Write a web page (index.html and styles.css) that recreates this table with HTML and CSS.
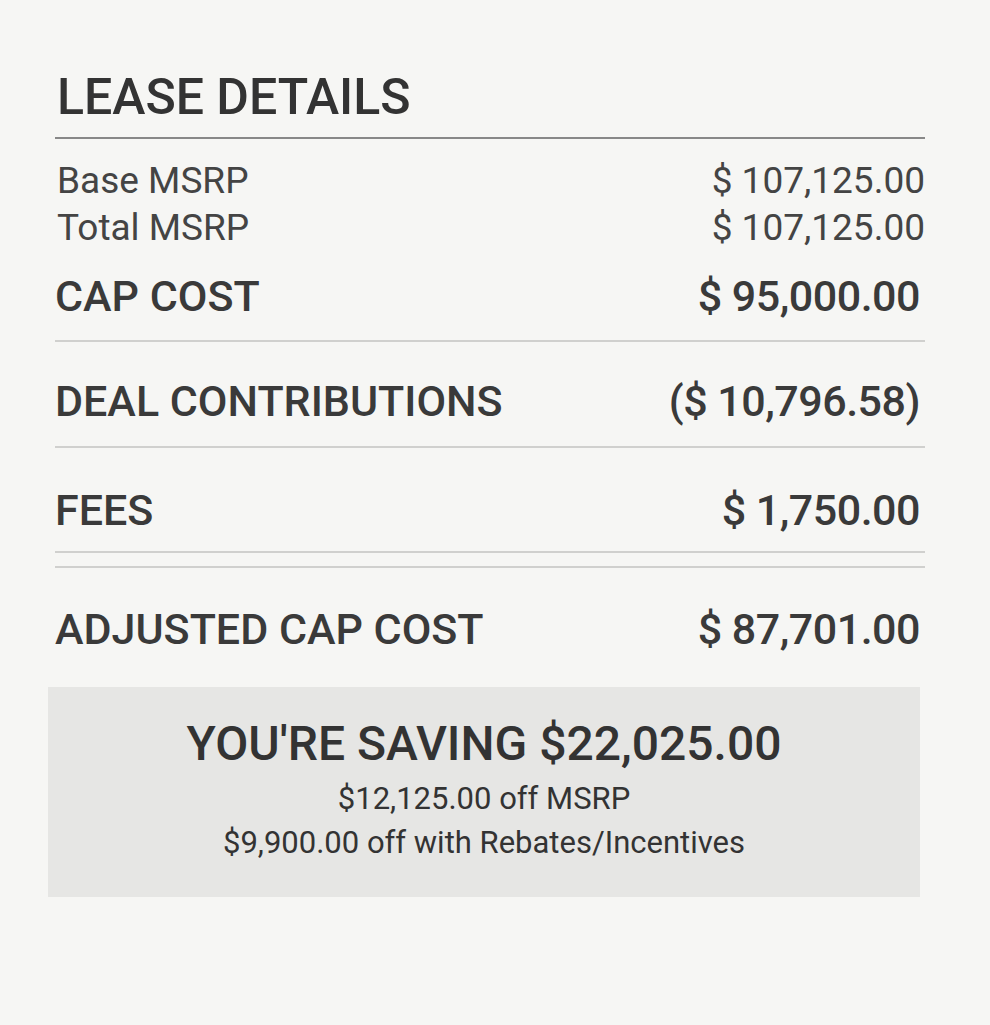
FILE: index.html
```html
<!DOCTYPE html>
<html lang="en">
<head>
    <meta charset="UTF-8">
    <meta name="viewport" content="width=device-width, initial-scale=1.0">
    <title>Lease Details</title>
    <link rel="stylesheet" href="styles.css">
</head>
<body>
    <main class="lease">
        <h1 class="lease-title">LEASE DETAILS</h1>
        <section class="msrp">
            <div class="row row-small">
                <span>Base MSRP</span>
                <span>$ 107,125.00</span>
            </div>
            <div class="row row-small">
                <span>Total MSRP</span>
                <span>$ 107,125.00</span>
            </div>
        </section>
        <div class="row row-big row-cap">
            <span>CAP COST</span>
            <span class="amount">$ 95,000.00</span>
        </div>
        <div class="row row-big row-deal">
            <span>DEAL CONTRIBUTIONS</span>
            <span class="amount">($ 10,796.58)</span>
        </div>
        <div class="row row-big row-fees">
            <span>FEES</span>
            <span class="amount">$ 1,750.00</span>
        </div>
        <div class="row row-big row-adjusted">
            <span>ADJUSTED CAP COST</span>
            <span class="amount">$ 87,701.00</span>
        </div>
        <section class="savings">
            <h2>YOU'RE SAVING $22,025.00</h2>
            <p>$12,125.00 off MSRP</p>
            <p>$9,900.00 off with Rebates/Incentives</p>
        </section>
    </main>
</body>
</html>
```

FILE: styles.css
```css
body {
    font-family: Roboto, "Liberation Sans", sans-serif;
    margin: 0;
    padding: 0;
    background-color: #f6f6f4;
    color: #3a3a3a;
}
.lease {
    width: 870px;
    padding: 67px 0 0 55px;
}
.lease-title {
    font-size: 50px;
    font-weight: 500;
    line-height: 60px;
    margin: 0;
    padding: 0 0 10px 2px;
    color: #333;
    border-bottom: 2px solid #888;
}
.msrp {
    padding-top: 18px;
}
.row {
    display: flex;
    justify-content: space-between;
    align-items: center;
}
.row-small {
    font-size: 37px;
    line-height: 47px;
    color: #444;
    padding: 0 0 0 2px;
}
.row-big {
    font-size: 43px;
    font-weight: 500;
    line-height: 54px;
    padding: 32px 5px 18px 0;
    border-bottom: 2px solid #d0d0ce;
}
.amount {
    letter-spacing: -0.5px;
}
.row-cap {
    padding-top: 18px;
    padding-bottom: 17px;
}
.row-fees {
    padding-top: 35px;
    padding-bottom: 14px;
    position: relative;
}
.row-fees::after {
    content: "";
    position: absolute;
    left: 0;
    right: 0;
    bottom: -17px;
    border-bottom: 2px solid #d0d0ce;
}
.row-adjusted {
    border-bottom: none;
    padding-top: 49px;
    padding-bottom: 31px;
}
.savings {
    background-color: #e6e6e4;
    margin: 0 5px 0 -7px;
    padding: 29px 0 32px;
    text-align: center;
}
.savings h2 {
    font-size: 48px;
    font-weight: 500;
    line-height: 56px;
    margin: 0 0 5px;
    color: #333;
}
.savings p {
    font-size: 31px;
    line-height: 44px;
    margin: 0;
    color: #333;
}
```
